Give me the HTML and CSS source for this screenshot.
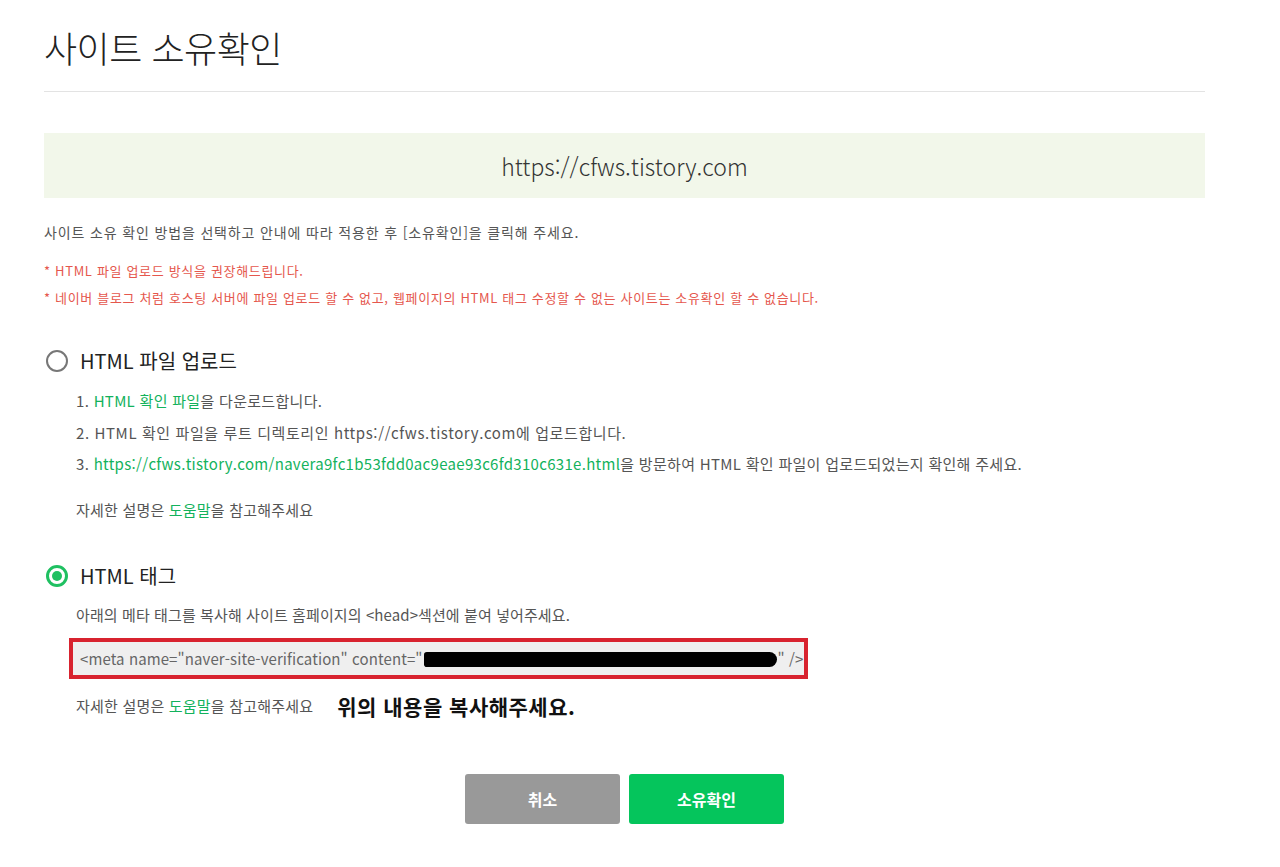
FILE: index.html
```html
<!DOCTYPE html>
<html lang="ko">
<head>
<meta charset="utf-8">
<title>사이트 소유확인</title>
<link rel="stylesheet" href="styles.css">
</head>
<body>
<div class="page">
  <h1 class="title">사이트 소유확인</h1>
  <div class="site-box">https://cfws.tistory.com</div>
  <p class="guide">사이트 소유 확인 방법을 선택하고 안내에 따라 적용한 후 [소유확인]을 클릭해 주세요.</p>
  <p class="warn first">* HTML 파일 업로드 방식을 권장해드립니다.</p>
  <p class="warn">* 네이버 블로그 처럼 호스팅 서버에 파일 업로드 할 수 없고, 웹페이지의 HTML 태그 수정할 수 없는 사이트는 소유확인 할 수 없습니다.</p>

  <section class="method">
    <div class="method-head">
      <span class="radio"></span>
      <span class="method-title">HTML 파일 업로드</span>
    </div>
    <ol class="steps">
      <li>1. <a class="link">HTML 확인 파일</a>을 다운로드합니다.</li>
      <li class="wide">2. HTML 확인 파일을 루트 디렉토리인 https://cfws.tistory.com에 업로드합니다.</li>
      <li>3. <a class="link">https://cfws.tistory.com/navera9fc1b53fdd0ac9eae93c6fd310c631e.html</a>을 방문하여 HTML 확인 파일이 업로드되었는지 확인해 주세요.</li>
    </ol>
    <p class="help help-1">자세한 설명은 <a class="link">도움말</a>을 참고해주세요</p>
  </section>

  <section class="method method-2">
    <div class="method-head">
      <span class="radio checked"></span>
      <span class="method-title">HTML 태그</span>
    </div>
    <p class="tag-desc">아래의 메타 태그를 복사해 사이트 홈페이지의 &lt;head&gt;섹션에 붙여 넣어주세요.</p>
    <div class="meta-frame">
      <div class="meta-box">&lt;meta name="naver-site-verification" content="<span class="redact"></span>" /&gt;</div>
    </div>
    <div class="help-row">
      <p class="help">자세한 설명은 <a class="link">도움말</a>을 참고해주세요</p>
      <span class="note">위의 내용을 복사해주세요.</span>
    </div>
  </section>

  <div class="buttons">
    <button class="btn cancel">취소</button>
    <button class="btn confirm">소유확인</button>
  </div>
</div>
</body>
</html>
```
FILE: styles.css
```css
* { box-sizing: border-box; }
html, body { margin: 0; padding: 0; background: #fff; }
body {
  font-family: "Noto Sans CJK KR", "Noto Sans", sans-serif;
  color: #555;
}
.page {
  width: 1161px;
  margin-left: 44px;
  padding-top: 23px;
}
.title {
  margin: 0;
  font-size: 36px;
  font-weight: 300;
  color: #222;
  line-height: 48px;
  padding-bottom: 20px;
  border-bottom: 1px solid #e3e3e3;
  letter-spacing: -0.5px;
}
.site-box {
  margin-top: 41px;
  height: 65px;
  background: #f2f7ea;
  display: flex;
  align-items: center;
  justify-content: center;
  font-size: 23px;
  color: #333;
  font-weight: 300;
}
.guide {
  margin: 24px 0 0;
  font-size: 14px;
  line-height: 20px;
  color: #555;
  letter-spacing: 0.85px;
}
.warn {
  margin: 7px 0 0;
  font-size: 13px;
  line-height: 20px;
  color: #e5574d;
  letter-spacing: 0.67px;
}
.warn.first { margin-top: 19px; }
.method { margin-top: 39px; }
.method-head {
  display: flex;
  align-items: center;
  gap: 12px;
  margin-left: 2px;
}
.radio {
  width: 22px;
  height: 22px;
  border-radius: 50%;
  border: 2px solid #777;
  display: inline-flex;
  align-items: center;
  justify-content: center;
  flex: none;
}
.radio.checked { border: 3px solid #1fc061; }
.radio.checked::after {
  content: "";
  width: 10px;
  height: 10px;
  border-radius: 50%;
  background: #1fc061;
}
.method-title {
  font-size: 20px;
  color: #222;
  line-height: 28px;
}
.steps {
  list-style: none;
  margin: 16px 0 0 32px;
  padding: 0;
}
.steps li {
  font-size: 15px;
  line-height: 20px;
  color: #555;
  margin-bottom: 11.5px;
  letter-spacing: 0.3px;
}
.steps li.wide { letter-spacing: 0.6px; }
.link { color: #13b25c; text-decoration: none; }
.help {
  margin: 0;
  font-size: 15px;
  line-height: 20px;
  color: #555;
  letter-spacing: 0.2px;
}
.help-1 { margin: 26px 0 0 32px; }
.method-2 { margin-top: 42px; }
.tag-desc {
  margin: 15px 0 0 32px;
  font-size: 15px;
  line-height: 20px;
  color: #555;
  letter-spacing: 0.1px;
}
.meta-frame {
  margin: 13px 0 0 25px;
  width: 739px;
  border: 4px solid #d8232f;
}
.meta-box {
  background: #efefef;
  height: 33px;
  line-height: 33px;
  white-space: nowrap;
  padding-left: 7px;
  font-size: 15px;
  color: #666;
  letter-spacing: 0.1px;
}
.redact {
  display: inline-block;
  vertical-align: middle;
  width: 353px;
  height: 15px;
  background: #000;
  border-radius: 3px 8px 8px 3px;
  margin: -2px 1px 0;
}
.help-row {
  margin: 12px 0 0 32px;
  display: flex;
  align-items: center;
}
.note {
  margin-left: 24px;
  font-size: 21px;
  font-weight: 700;
  color: #111;
  letter-spacing: 0.5px;
}
.buttons {
  display: flex;
  justify-content: center;
  gap: 9px;
  margin-top: 53px;
}
.btn {
  width: 155px;
  height: 50px;
  border: none;
  border-radius: 3px;
  color: #fff;
  font-family: "Noto Sans CJK KR", "Noto Sans", sans-serif;
  font-size: 16px;
  font-weight: 700;
}
.cancel { background: #999; }
.confirm { background: #05c55c; }
```
